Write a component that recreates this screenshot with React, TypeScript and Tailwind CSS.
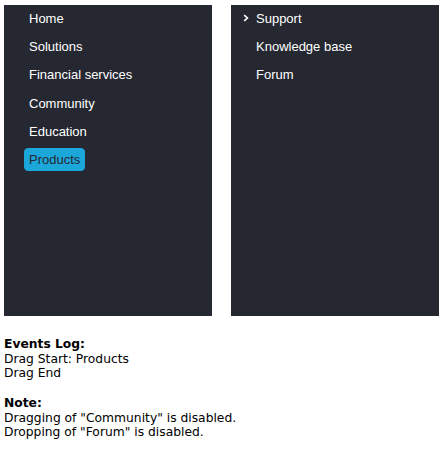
const LEFT_ITEMS = [
  { text: "Home" },
  { text: "Solutions" },
  { text: "Financial services" },
  { text: "Community" },
  { text: "Education" },
  { text: "Products", selected: true },
];

const RIGHT_ITEMS = [
  { text: "Support", expandable: true },
  { text: "Knowledge base" },
  { text: "Forum" },
];

type Item = { text: string; selected?: boolean; expandable?: boolean };

function Chevron() {
  return (
    <svg width="6" height="8" viewBox="0 0 6 8" className="ml-[12px]">
      <path d="M1.2 1.2 L4.4 4 L1.2 6.8" fill="none" stroke="#ffffff" strokeWidth="1.6" />
    </svg>
  );
}

function TreePanel({ items }: { items: Item[] }) {
  return (
    <div className="flex h-[311px] w-[208px] flex-col gap-[5.4px] bg-[#262831] pt-[1.5px]">
      {items.map((item) => (
        <div key={item.text} className="flex items-center">
          <div className="flex w-[20px] shrink-0 items-center">{item.expandable && <Chevron />}</div>
          <span
            className={
              item.selected
                ? "rounded-[4px] border border-[#1ca7db] bg-[#1ca7db] px-[4px] py-[3px] text-[13px] leading-[15px] text-[#262831]"
                : "rounded-[4px] border border-transparent px-[4px] py-[3px] text-[13px] leading-[15px] text-white"
            }
          >
            {item.text}
          </span>
        </div>
      ))}
    </div>
  );
}

export default function App() {
  return (
    <div className="min-h-[450px] bg-white pl-[4px] pt-[5px]">
      <div className="flex gap-[19px] font-['Liberation_Sans',Arial,sans-serif]">
        <TreePanel items={LEFT_ITEMS} />
        <TreePanel items={RIGHT_ITEMS} />
      </div>

      <div className="mt-[21px] font-['DejaVu_Sans',Verdana,sans-serif] text-[12.3px] leading-[14.7px] text-black">
        <div className="font-bold">Events Log:</div>
        <div>Drag Start: Products</div>
        <div>Drag End</div>
        <div className="mt-[14.7px] font-bold">Note:</div>
        <div>Dragging of "Community" is disabled.</div>
        <div>Dropping of "Forum" is disabled.</div>
      </div>
    </div>
  );
}
